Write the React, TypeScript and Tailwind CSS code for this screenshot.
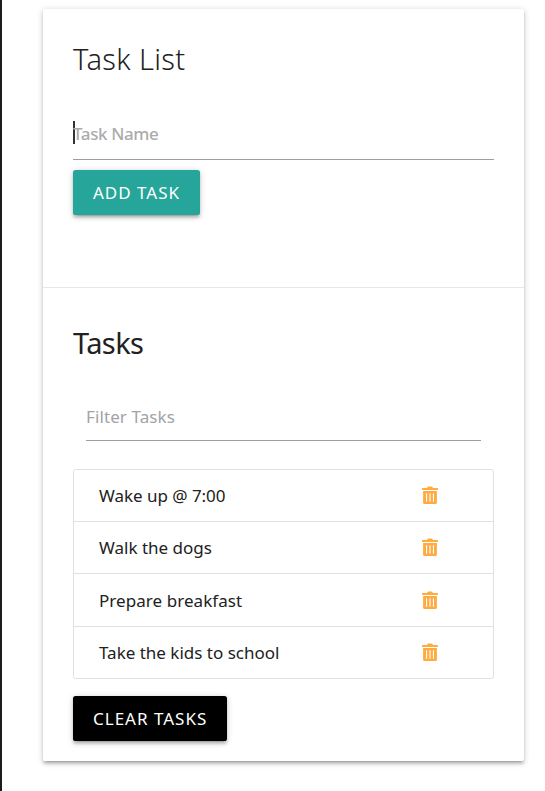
const tasks = [
  { name: "Wake up @ 7:00", height: "h-[52px]", tracking: "tracking-[-0.03px]" },
  { name: "Walk the dogs", height: "h-[52px]", tracking: "tracking-[0px]" },
  { name: "Prepare breakfast", height: "h-[53px] pt-px", tracking: "tracking-[0.06px]" },
  { name: "Take the kids to school", height: "h-[51px]", tracking: "tracking-[0px]" },
];

const raised =
  "shadow-[0_2.6px_2.6px_0_rgba(0,0,0,0.14),0_4px_1.3px_-2.6px_rgba(0,0,0,0.12),0_1.3px_6.5px_0_rgba(0,0,0,0.2)]";

function TrashIcon() {
  return (
    <svg viewBox="0 0 16 18" className="mb-px h-[18px] w-4 text-[#ffab40]" fill="currentColor" aria-hidden="true">
      <path d="M5 2.1 5.5 1.1Q5.8.6 6.4.6h3.2q.6 0 .9.5l.5 1h4.6q.4 0 .4.4v1.1q0 .4-.4.4H.4Q0 4 0 3.6V2.5q0-.4.4-.4z" />
      <path
        fillRule="evenodd"
        d="M1.1 5h13.8v11.4q0 1.6-1.6 1.6H2.7q-1.6 0-1.6-1.6zM4 7.2v8.6h1.1V7.2zm3.45 0v8.6h1.1V7.2zm3.45 0v8.6H12V7.2z"
      />
    </svg>
  );
}

export default function App() {
  return (
    <div className="h-[791px] w-[545px] overflow-hidden border-l-2 border-[#1c1b1e] bg-white pt-[9px] pl-[41px] font-['Noto_Sans','Open_Sans',sans-serif] text-[17px] text-[#212121]">
      <main className={`flex h-[752px] w-[481px] flex-col rounded-[2.6px] bg-white ${raised}`}>
        <section className="h-[279px] border-b border-[#e8e8e8] px-[30px] pt-[30px]">
          <h1 className="h-10 text-[29px] leading-10 font-light tracking-[0.36px] whitespace-nowrap">
            Task List
          </h1>
          <div className="mt-[29px] flex h-[52px] items-center border-b border-[#9e9e9e] leading-[52px] text-[#ababab]">
            <span className="-mt-[3px] h-[23px] w-[2px] shrink-0 bg-[#333]" />
            <span className="-ml-[2px] font-medium tracking-[-0.38px]">Task Name</span>
          </div>
          <button className={`mt-[10px] flex h-[45px] w-[127px] items-center rounded-[2.6px] bg-[#26a69a] pl-5 whitespace-nowrap text-white ${raised}`}>
            <span className="tracking-[1px]">ADD TASK</span>
          </button>
        </section>
        <section className="px-[30px] pt-[35px]">
          <h2 className="h-10 text-[29px] leading-10 font-[450] tracking-[-0.6px] whitespace-nowrap">
            Tasks
          </h2>
          <div className="mx-[13px] mt-[30px] flex h-[48px] items-center border-b border-[#9e9e9e] text-[#a3a3a3]">
            <span className="tracking-[0.1px]">Filter Tasks</span>
          </div>
          <ul className="mt-[28px] h-[210px] overflow-hidden rounded-[2.6px] border border-[#e0e0e0]">
            {tasks.map((task) => (
              <li
                key={task.name}
                className={`flex items-center justify-between border-b border-[#e0e0e0] pr-[55px] pl-[25px] last:border-b-0 ${task.height}`}
              >
                <span className={task.tracking}>{task.name}</span>
                <TrashIcon />
              </li>
            ))}
          </ul>
          <button className={`mt-[17px] flex h-[45px] w-[154px] items-center rounded-[2.6px] bg-black pl-5 whitespace-nowrap text-white ${raised}`}>
            <span className="tracking-[1px]">CLEAR TASKS</span>
          </button>
        </section>
      </main>
    </div>
  );
}
